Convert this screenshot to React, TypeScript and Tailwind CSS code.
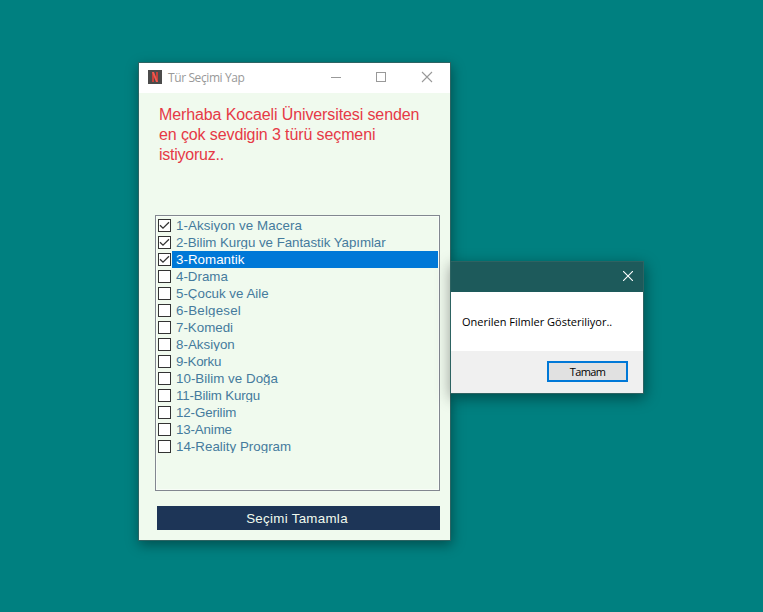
const genres = [
  { label: "1-Aksiyon ve Macera", checked: true, track: "tracking-[0.08px]" },
  { label: "2-Bilim Kurgu ve Fantastik Yapımlar", checked: true, track: "tracking-[-0.05px]" },
  { label: "3-Romantik", checked: true, selected: true, track: "tracking-[0.03px]" },
  { label: "4-Drama", track: "tracking-normal" },
  { label: "5-Çocuk ve Aile", track: "tracking-normal" },
  { label: "6-Belgesel", track: "tracking-[0.2px]" },
  { label: "7-Komedi", track: "tracking-normal" },
  { label: "8-Aksiyon", track: "tracking-[0.03px]" },
  { label: "9-Korku", track: "tracking-[-0.2px]" },
  { label: "10-Bilim ve Doğa", track: "tracking-[0.03px]" },
  { label: "11-Bilim Kurgu", track: "tracking-[-0.18px]" },
  { label: "12-Gerilim", track: "tracking-[-0.12px]" },
  { label: "13-Anime", track: "tracking-[-0.15px]" },
  { label: "14-Reality Program", track: "tracking-[0.02px]" },
];

function CheckBox({ checked }: { checked?: boolean }) {
  return (
    <span className="ml-px mt-[2px] block h-[13px] w-[13px] shrink-0 border border-[#333333] bg-white">
      {checked && (
        <svg className="block" width="11" height="11" viewBox="0 0 11 11" fill="none" stroke="#333" strokeWidth="1.3">
          <path d="M1 5.2 L4 8.2 L10 2.2" />
        </svg>
      )}
    </span>
  );
}

function CloseIcon({ color }: { color: string }) {
  return (
    <svg width="10" height="10" viewBox="0 0 10 10" fill="none" stroke={color} strokeWidth="1.1">
      <path d="M0 0 L10 10 M10 0 L0 10" />
    </svg>
  );
}

function MainWindow() {
  return (
    <div className="absolute left-[138px] top-[62px] flex h-[479px] w-[313px] flex-col border border-[#2d6362] bg-[#f0faee] shadow-[1px_4px_12px_rgba(0,0,0,0.38)]">
      <div className="flex h-[30px] shrink-0 items-start bg-white pl-[9px] pt-[7px]">
        <svg width="14" height="14" viewBox="0 0 14 14" className="shrink-0">
          <path fill="#4b4b4b" d="M0 0h14v14H0z" />
          <path fill="#c9403b" d="M4 2h2v10H4zM8 2h2v10H8z" />
          <path fill="#f2594f" d="M4 2h2l4 10H8z" />
        </svg>
        <span className="ml-[6px] w-[163px] whitespace-nowrap font-['Open_Sans',sans-serif] text-[12px] leading-[16px] tracking-[-0.4px] text-[#999999]">
          Tür Seçimi Yap
        </span>
        <svg width="102" height="14" viewBox="0 0 102 14" fill="none" stroke="#999">
          <path shapeRendering="crispEdges" d="M0 7.5h10M45.5 2.5h9v9h-9z" />
          <path strokeWidth="1.1" d="M91 2l10 10M101 2l-10 10" />
        </svg>
      </div>
      <p className="ml-5 mt-3 h-[110px] shrink-0 whitespace-nowrap text-[16px] leading-[20px] tracking-[-0.11px] text-[#e63946]">
        Merhaba Kocaeli Üniversitesi senden
        <br />
        en çok sevdigin 3 türü seçmeni
        <br />
        <span className="tracking-[-0.25px]">istiyoruz..</span>
      </p>
      <div className="ml-4 h-[276px] w-[285px] shrink-0 border border-[#828790]">
        <ul className="h-full border border-[#f8fdf7]">
          {genres.map((g) => (
            <li key={g.label} className="flex h-[17px] text-[13.33px]">
              <CheckBox checked={g.checked} />
              <span
                className={`ml-px h-[17px] flex-1 whitespace-nowrap pl-1 leading-[17px] ${g.track} ${
                  g.selected ? "bg-[#0078d7] text-white" : "text-[#457b9d]"
                }`}
              >
                <span className="block h-[15px] overflow-hidden">{g.label}</span>
              </span>
            </li>
          ))}
        </ul>
      </div>
      <button className="ml-[18px] mt-[15px] h-6 w-[283px] shrink-0 bg-[#1d3557] pr-[3px] pt-px text-[13.33px] leading-[23px] tracking-[0.3px] text-[#f1faee]">
        Seçimi Tamamla
      </button>
    </div>
  );
}

function MessageBox() {
  return (
    <div className="absolute left-[450px] top-[261px] flex h-[133px] w-[194px] flex-col border border-[#2d6362] bg-white font-['Open_Sans',sans-serif] text-[11px] text-black shadow-[1px_4px_14px_rgba(0,0,0,0.42)]">
      <div className="flex h-[30px] shrink-0 justify-end bg-[#1d5a5b] pr-[10px] pt-[9px]">
        <CloseIcon color="#fff" />
      </div>
      <p className="h-[59px] shrink-0 whitespace-nowrap pl-[11px] pt-[22px] leading-[16px]">Onerilen Filmler Gösteriliyor..</p>
      <div className="flex flex-1 justify-end bg-[#f0f0f0] pr-[15px] pt-[10px]">
        <button className="h-[21px] w-[81px] border-2 border-[#0078d7] bg-[#e1e1e1] leading-[18px] tracking-[-0.6px]">Tamam</button>
      </div>
    </div>
  );
}

export default function App() {
  return (
    <main className="relative h-[612px] w-[763px] overflow-hidden bg-[#008080] font-['Liberation_Sans',Arial,sans-serif]">
      <MainWindow />
      <MessageBox />
    </main>
  );
}
